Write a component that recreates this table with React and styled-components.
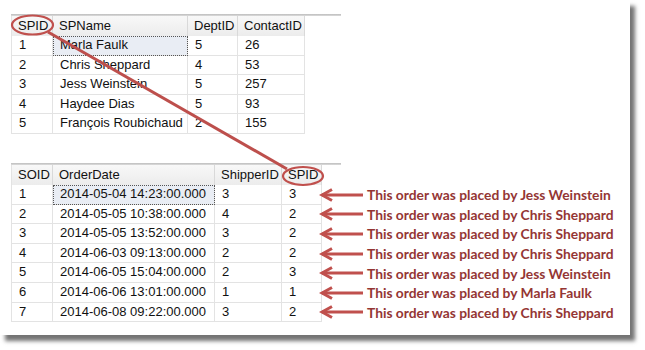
import styled, { createGlobalStyle } from 'styled-components';

const GlobalStyle = createGlobalStyle`
  body {
    margin: 0;
    background: #ffffff;
  }
`;

const Page = styled.div`
  min-height: 350px;
`;

const Frame = styled.div`
  position: relative;
  width: 630px;
  height: 335px;
  box-sizing: border-box;
  padding: 14px 0 0 11px;
  background: #ffffff;
  box-shadow: 5px 6px 4px rgba(0, 0, 0, 0.55);
  font-family: 'Liberation Sans', Arial, sans-serif;
  font-size: 13px;
  color: #111;
`;

const PaneRule = styled.div`
  width: 330px;
  height: 2px;
  background: linear-gradient(#bdbdbd, #dcdcdc);
  margin-top: ${p => p.$top || 0}px;
`;

const Grid = styled.div`
  display: grid;
  grid-template-columns: ${p => p.$cols};
  border-left: 1px solid #e3e3e3;
  width: max-content;
`;

const HeadCell = styled.div`
  height: 20px;
  line-height: 20px;
  padding-left: 6px;
  box-sizing: border-box;
  background: linear-gradient(#f8f8f8, #ececec);
  border-right: 1px solid #d9d9d9;
  white-space: nowrap;
  overflow: hidden;
`;

const Cell = styled.div`
  height: 19.6px;
  line-height: 18px;
  padding-left: 7px;
  box-sizing: border-box;
  border-right: 1px solid #e3e3e3;
  border-bottom: 1px solid #e3e3e3;
  white-space: nowrap;
  overflow: hidden;
  background: ${p => (p.$selected ? '#e9edf4' : '#ffffff')};
  outline: ${p => (p.$selected ? '1px dotted #555' : 'none')};
  outline-offset: -1px;
`;

const Results = styled.div`
  display: flex;
  align-items: flex-start;
`;

const Notes = styled.div`
  display: flex;
  flex-direction: column;
  padding-top: 20px;
  margin-left: -3px;
`;

const Note = styled.div`
  display: flex;
  align-items: center;
  gap: 4px;
  height: 19.6px;
  font-family: Lato, 'Liberation Sans', sans-serif;
  font-weight: 700;
  font-size: 13.8px;
  color: #943634;
  white-space: nowrap;
`;

const Overlay = styled.svg`
  position: absolute;
  left: 0;
  top: 0;
  pointer-events: none;
`;

const sellers = [
  [1, 'Marla Faulk', 5, 26],
  [2, 'Chris Sheppard', 4, 53],
  [3, 'Jess Weinstein', 5, 257],
  [4, 'Haydee Dias', 5, 93],
  [5, 'François Roubichaud', 2, 155],
];

const orders = [
  [1, '2014-05-04 14:23:00.000', 3, 3, 'Jess Weinstein'],
  [2, '2014-05-05 10:38:00.000', 4, 2, 'Chris Sheppard'],
  [3, '2014-05-05 13:52:00.000', 3, 2, 'Chris Sheppard'],
  [4, '2014-06-03 09:13:00.000', 2, 2, 'Chris Sheppard'],
  [5, '2014-06-05 15:04:00.000', 2, 3, 'Jess Weinstein'],
  [6, '2014-06-06 13:01:00.000', 1, 1, 'Marla Faulk'],
  [7, '2014-06-08 09:22:00.000', 3, 2, 'Chris Sheppard'],
];

const Arrow = () => (
  <svg width="44" height="14" viewBox="0 0 44 14">
    <path d="M3 7 H44" stroke="#c0504d" strokeWidth="3" />
    <path d="M13 1.5 L3 7 L13 12.5" fill="none" stroke="#c0504d" strokeWidth="3" />
  </svg>
);

const App = () => (
  <Page>
    <GlobalStyle />
    <Frame>
      <PaneRule />
      <Grid $cols="41px 135px 50px 67px">
        {['SPID', 'SPName', 'DeptID', 'ContactID'].map(h => (
          <HeadCell key={h}>{h}</HeadCell>
        ))}
        {sellers.map(row =>
          row.map((v, i) => (
            <Cell key={`${row[0]}-${i}`} $selected={row[0] === 1 && i === 1}>
              {v}
            </Cell>
          ))
        )}
      </Grid>

      <PaneRule $top={29} />
      <Results>
        <Grid $cols="41px 162px 67px 40px">
          {['SOID', 'OrderDate', 'ShipperID', 'SPID'].map(h => (
            <HeadCell key={h}>{h}</HeadCell>
          ))}
          {orders.map(row =>
            row.slice(0, 4).map((v, i) => (
              <Cell key={`${row[0]}-${i}`} $selected={row[0] === 1 && i === 1}>
                {v}
              </Cell>
            ))
          )}
        </Grid>
        <Notes>
          {orders.map(row => (
            <Note key={row[0]}>
              <Arrow />
              This order was placed by {row[4]}
            </Note>
          ))}
        </Notes>
      </Results>

      <Overlay width="630" height="335">
        <ellipse cx="32.5" cy="25" rx="20.5" ry="9.5" fill="none" stroke="#c0504d" strokeWidth="2.2" />
        <ellipse cx="303" cy="176" rx="20" ry="9" fill="none" stroke="#c0504d" strokeWidth="2.2" />
        <line x1="48" y1="32" x2="287" y2="169" stroke="#bd4f4c" strokeWidth="3" />
      </Overlay>
    </Frame>
  </Page>
);

export default App;
